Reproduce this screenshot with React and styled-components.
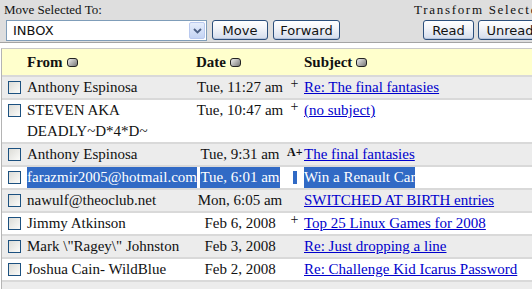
import React from "react"
import styled, { createGlobalStyle } from "styled-components"

const GlobalStyle = createGlobalStyle`
  html, body {
    margin: 0;
    padding: 0;
    background: #fff;
    overflow: hidden;
  }
  body {
    width: 532px;
    height: 289px;
    font-family: "Liberation Serif", "Times New Roman", serif;
    color: #111;
  }
`

const Page = styled.div`
  width: 720px;
`

const Toolbar = styled.div`
  display: flex;
  height: 42px;
  padding: 0 0 0 6px;
  background: #dedede;
  border-bottom: 1px solid #a4a4a4;
`

const Group = styled.div`
  display: flex;
  flex-direction: column;
  margin-left: ${props => props.offset || 0}px;
`

const Label = styled.div`
  font-size: 13px;
  line-height: 15px;
  padding-top: 2px;
  margin-left: ${props => props.shift || 0}px;
  letter-spacing: ${props => props.spread || 0}px;
  height: 18px;
  white-space: nowrap;
`

const Controls = styled.div`
  display: flex;
  gap: ${props => props.gap || 5}px;
  margin-left: ${props => props.indent || 0}px;
`

const Select = styled.div`
  position: relative;
  width: 201px;
  height: 21px;
  box-sizing: border-box;
  border: 1px solid #7f9db9;
  background: #fff;
  font-family: "DejaVu Sans", Verdana, sans-serif;
  font-size: 13px;
  line-height: 19px;
  padding-left: 6px;
`

const Arrow = styled.span`
  position: absolute;
  right: 1px;
  top: 1px;
  width: 16px;
  height: 17px;
  box-sizing: border-box;
  border: 1px solid #b9c9ef;
  border-radius: 2px;
  background: linear-gradient(#e6eefc, #c4d4f4);
  display: flex;
  align-items: center;
  justify-content: center;
`

const Button = styled.button`
  width: ${props => props.w}px;
  height: 20px;
  padding: 0;
  border: 1px solid #2c4f7c;
  border-radius: 3px;
  background: linear-gradient(#ffffff 0%, #f2f4f9 40%, #d3dcec 100%);
  font-family: "DejaVu Sans", Verdana, sans-serif;
  font-size: 13px;
  color: #111;
  line-height: 17px;
  box-shadow: inset 0 -1px 0 #b7c4dc;
`

const Table = styled.div`
  margin-top: 5px;
  margin-left: 1px;
  border-top: 1px solid #c8c8c8;
  border-left: 1px solid #b4b4b4;
  display: flex;
  flex-direction: column;
  gap: 2px;
  background: #d9d9d9;
`

const Row = styled.div`
  display: grid;
  grid-template-columns: 22px 169px 94px 15px 1fr;
  align-items: start;
  min-height: ${props => props.head ? 26 : 21}px;
  background: ${props => props.head ? "#ffffcc" : props.shade ? "#ececec" : "#ffffff"};
  font-size: 15px;
  line-height: 21px;
`

const HeadCell = styled.div`
  display: flex;
  align-items: center;
  gap: 4px;
  padding-left: ${props => props.pad || 0}px;
  font-weight: bold;
  height: 26px;
`

const SortIcon = styled.span`
  display: inline-block;
  width: 9px;
  height: 7px;
  border: 1px solid #222;
  border-radius: 3px;
  background: linear-gradient(135deg, #eeeeee, #777777);
  margin-top: 1px;
`

const BoxCell = styled.div`
  display: flex;
  justify-content: center;
  padding: 4px 0 0 2px;
`

const Check = styled.span`
  display: block;
  width: 13px;
  height: 13px;
  box-sizing: border-box;
  border: 1px solid #1c5180;
  background: linear-gradient(135deg, #dcdcd7, #fbfbf9);
`

const From = styled.div`
  padding-left: 3px;
`

const DateCell = styled.div`
  text-align: center;
  white-space: nowrap;
`

const Mark = styled.div`
  text-align: center;
  font-size: ${props => props.bold ? 12 : 14}px;
  font-weight: ${props => props.bold ? "bold" : "normal"};
  line-height: ${props => props.bold ? 16 : 14}px;
  white-space: nowrap;
`

const Subject = styled.a`
  color: #0000cc;
  text-decoration: underline;
  white-space: nowrap;
  justify-self: start;
  padding-left: 2px;
`

const Picked = styled.span`
  background: #316ac5;
  color: #fff;
  text-decoration: none;
  display: inline-block;
`

const Bar = styled.span`
  display: inline-block;
  width: 4px;
  height: 13px;
  margin-top: 4px;
  background: #316ac5;
`

const messages = [
  { from: "Anthony Espinosa", date: "Tue, 11:27 am", mark: "+", subject: "Re: The final fantasies" },
  { from: "STEVEN AKA DEADLY~D*4*D~", date: "Tue, 10:47 am", mark: "+", subject: "(no subject)" },
  { from: "Anthony Espinosa", date: "Tue, 9:31 am", mark: "A+", subject: "The final fantasies" },
  { from: "farazmir2005@hotmail.com", date: "Tue, 6:01 am", mark: "", subject: "Win a Renault Car", picked: true },
  { from: "nawulf@theoclub.net", date: "Mon, 6:05 am", mark: "", subject: "SWITCHED AT BIRTH entries" },
  { from: "Jimmy Atkinson", date: "Feb 6, 2008", mark: "+", subject: "Top 25 Linux Games for 2008" },
  { from: "Mark \\\"Ragey\\\" Johnston", date: "Feb 3, 2008", mark: "", subject: "Re: Just dropping a line" },
  { from: "Joshua Cain- WildBlue", date: "Feb 2, 2008", mark: "", subject: "Re: Challenge Kid Icarus Password" },
]

const ChevronDown = () => (
  <svg width="9" height="6" viewBox="0 0 9 6">
    <path d="M1 1 L4.5 4.5 L8 1" fill="none" stroke="#4d6185" strokeWidth="1.8" />
  </svg>
)

const MessageRow = ({ m, shade }) => {
  const wrap = text => (m.picked ? <Picked>{text}</Picked> : text)
  return (
    <Row shade={shade}>
      <BoxCell><Check /></BoxCell>
      <From>{wrap(m.from)}</From>
      <DateCell>{wrap(m.date)}</DateCell>
      {m.picked ? (
        <Mark><Bar /></Mark>
      ) : (
        <Mark bold={m.mark === "A+"}>{m.mark}</Mark>
      )}
      <Subject href="#">{wrap(m.subject)}</Subject>
    </Row>
  )
}

const App = () => {
  return (
    <Page>
      <GlobalStyle />
      <Toolbar>
        <Group>
          <Label shift={-2}>Move Selected To:</Label>
          <Controls>
            <Select>
              INBOX
              <Arrow><ChevronDown /></Arrow>
            </Select>
            <Button w={56}>Move</Button>
            <Button w={67}>Forward</Button>
          </Controls>
        </Group>
        <Group offset={74}>
          <Label spread={1.7}>Transform Selected Messages:</Label>
          <Controls gap={4} indent={9}>
            <Button w={51}>Read</Button>
            <Button w={64}>Unread</Button>
            <Button w={60}>Delete</Button>
          </Controls>
        </Group>
      </Toolbar>
      <Table>
        <Row head>
          <div />
          <HeadCell pad={3}>From <SortIcon /></HeadCell>
          <HeadCell pad={3}>Date <SortIcon /></HeadCell>
          <div />
          <HeadCell pad={2}>Subject <SortIcon /></HeadCell>
        </Row>
        {messages.map((m, i) => (
          <MessageRow key={i} m={m} shade={i % 2 === 0} />
        ))}
        <Row shade />
      </Table>
    </Page>
  )
}

export default App
